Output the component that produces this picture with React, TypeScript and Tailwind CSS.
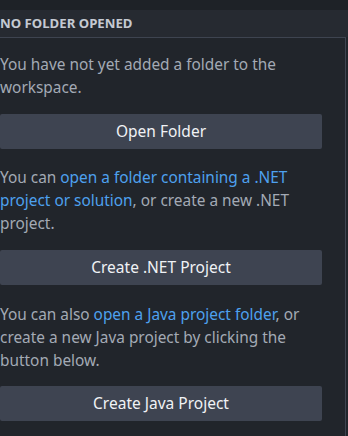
import React from "react";

const font = { fontFamily: '"Noto Sans", "Open Sans", sans-serif' };

function Btn({ label }: { label: string }) {
  return (
    <div className="w-[322px] h-[35px] shrink-0 rounded-[2px] bg-[#3e4451] flex items-center justify-center text-[15.5px] text-[#f0f2f5]">
      {label}
    </div>
  );
}

export default function App() {
  return (
    <div className="w-[348px] h-[436px] bg-[#21252b] overflow-hidden flex flex-col" style={font}>
      <div className="h-[10px] shrink-0 bg-[#1e2227]" />
      <div className="h-[27px] shrink-0 bg-[#262a31] flex items-center text-[13.2px] font-bold text-[#c4c9d2]">
        NO FOLDER OPENED
      </div>
      <div className="flex-1 w-[346px] border-t border-r border-[#3e4450] flex flex-col text-[15.4px] leading-[23px] text-[#a3aab5]">
        <p className="mt-[15px] mb-[15px] pr-[20px]">You have not yet added a folder to the workspace.</p>
        <Btn label="Open Folder" />
        <p className="mt-[17px] mb-[15px] pr-[20px]">
          You can <span className="text-[#4ea1ef]">open a folder containing a .NET project or solution</span>, or create a new .NET project.
        </p>
        <Btn label="Create .NET Project" />
        <p className="mt-[18px] mb-[14px] pr-[20px]">
          You can also <span className="text-[#4ea1ef]">open a Java project folder</span>, or create a new Java project by clicking the button below.
        </p>
        <Btn label="Create Java Project" />
      </div>
    </div>
  );
}
